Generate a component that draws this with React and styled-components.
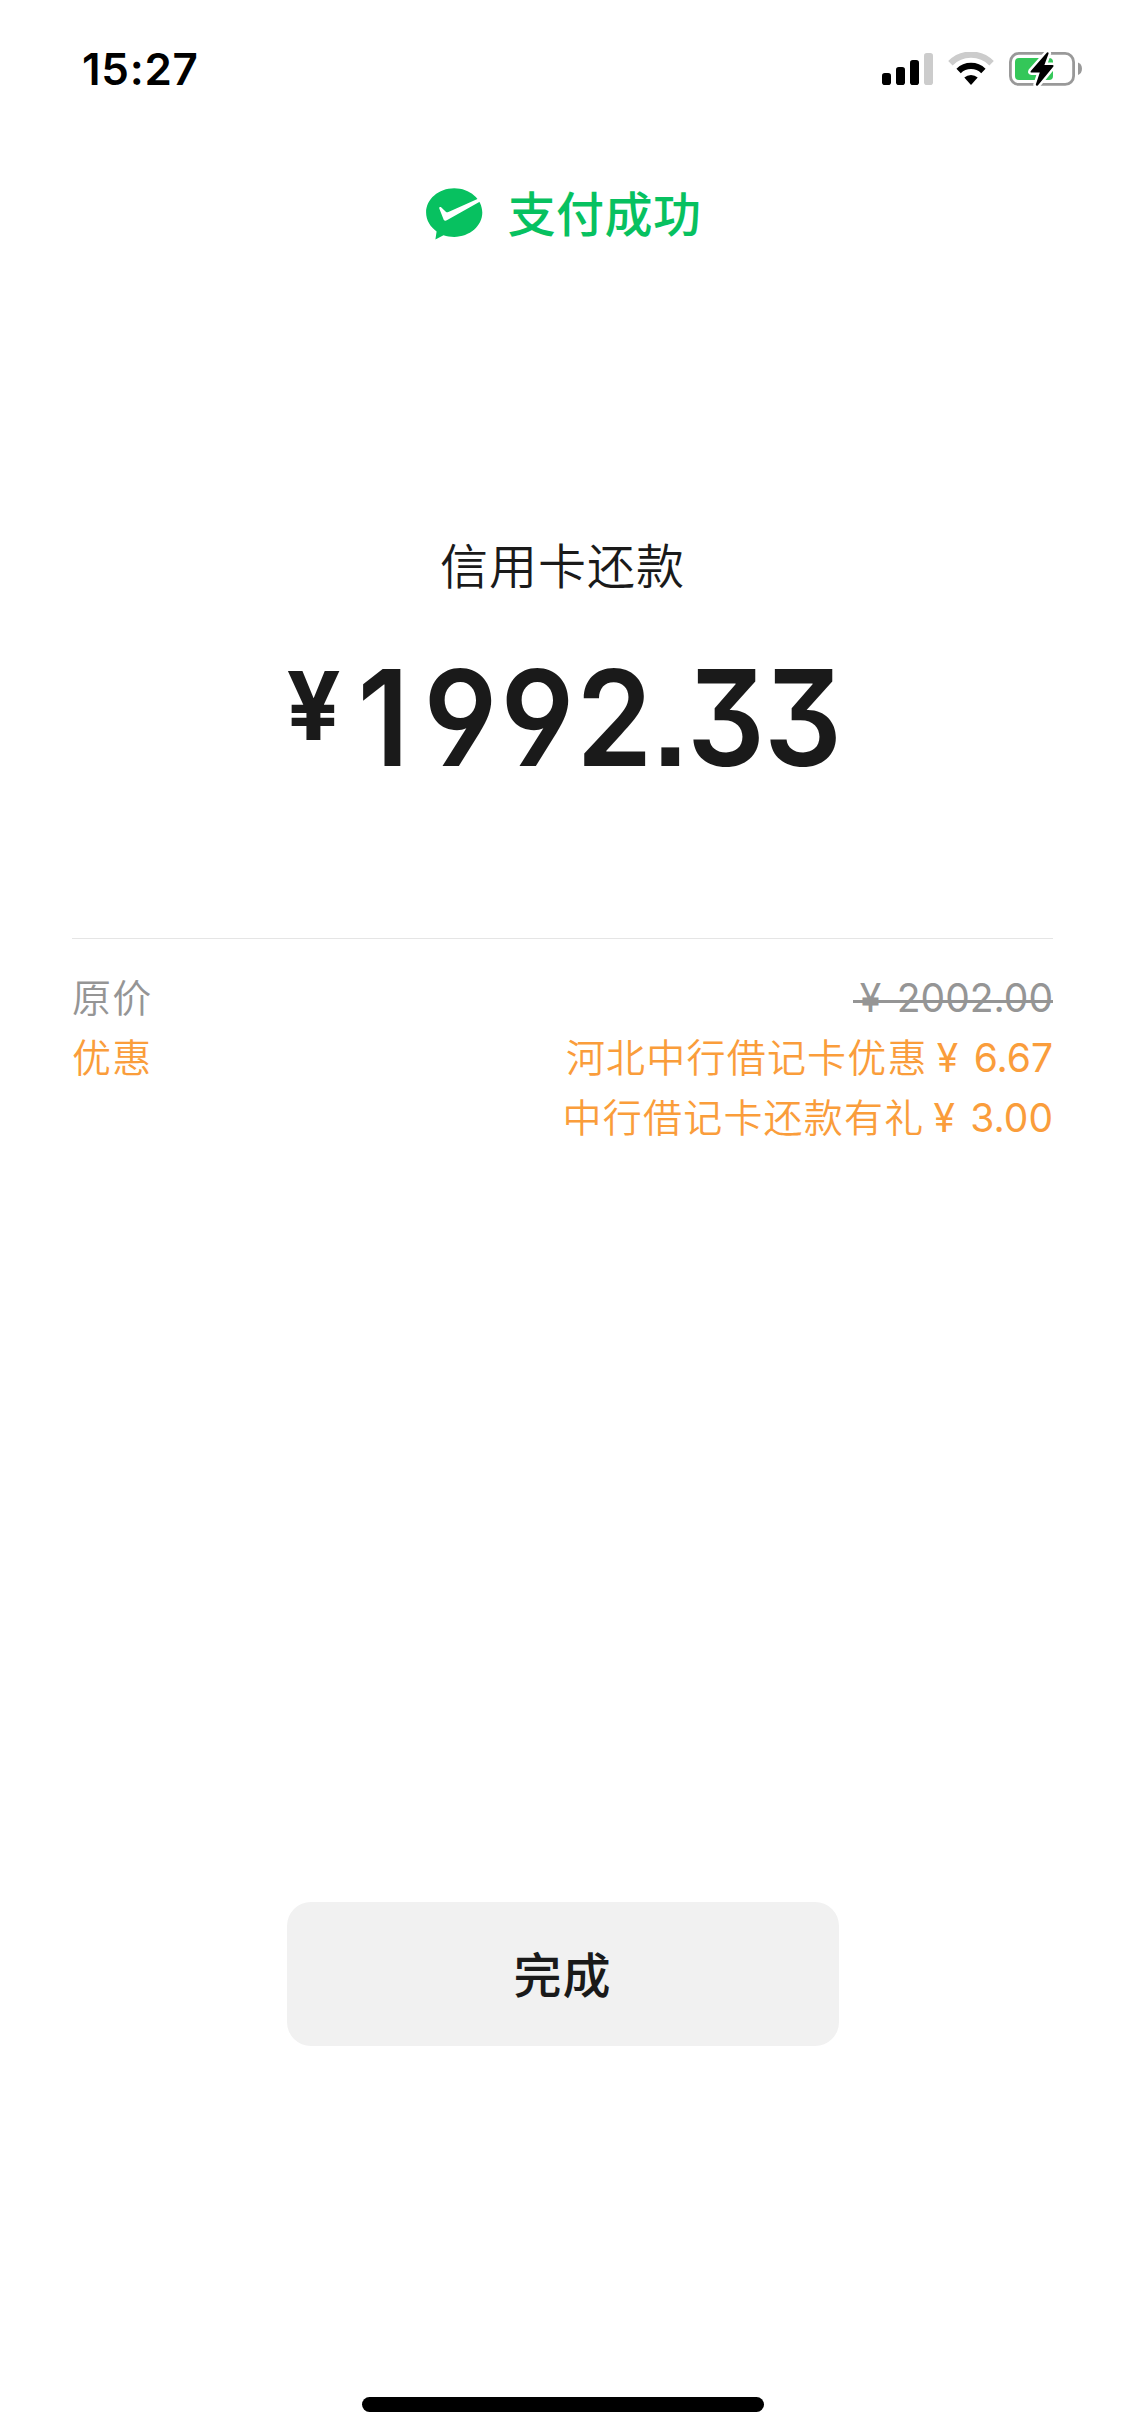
import React from 'react'
import styled, {createGlobalStyle} from 'styled-components'

const GlobalStl = createGlobalStyle`
  *, *::before, *::after {
    box-sizing: border-box;
  }

  body {
    margin: 0;
    background-color: #ffffff;
    font-family: "Inter", "Noto Sans CJK SC", sans-serif;
  }
`

const ScreenStl = styled.div`
  width: 1125px;
  height: 2436px;
  display: flex;
  flex-direction: column;
  align-items: center;
  background-color: #ffffff;
  overflow: hidden;
`

const StatusBarStl = styled.header`
  width: 100%;
  height: 132px;
  padding: 49px 42px 0 82px;
  display: flex;
  justify-content: space-between;
  align-items: flex-start;
`

const TimeStl = styled.span`
  font-size: 44px;
  font-weight: 600;
  line-height: 40px;
  letter-spacing: 0.7px;
  color: #000000;
`

const StatusIconsStl = styled.div`
  display: flex;
  gap: 15px;
  padding-top: 3px;
`

const ResultStl = styled.div`
  height: 164px;
  padding-left: 2px;
  display: flex;
  align-items: center;
  gap: 25px;
`

const ResultTextStl = styled.span`
  padding-top: 2px;
  font-size: 48px;
  font-weight: 500;
  line-height: 64px;
  letter-spacing: 0.4px;
  color: #07c160;
`

const MerchantStl = styled.div`
  margin-top: 235px;
  font-size: 48px;
  font-weight: 350;
  line-height: 72px;
  letter-spacing: 1px;
  color: #1a1a1a;
`

const AmountStl = styled.div`
  width: 552px;
  height: 160px;
  margin-top: 35px;
  display: flex;
  align-items: flex-start;
  color: #1a1a1a;
`

const CurrencyStl = styled.span`
  flex: 0 0 58px;
  font-size: 95px;
  line-height: 136px;
  font-weight: 650;
`

// condensed digits with a flat-top three, a straight-leg nine and a square dot
const DigitsStl = styled.span`
  display: flex;
  font-size: 133px;
  font-weight: 580;
  line-height: 160px;
  font-feature-settings: "ss01", "ss07", "cv09", "cv04";
  transform: scaleX(0.92);
  transform-origin: left center;
`

const DigitStl = styled.span`
  flex: none;
  width: ${({$dot}) => ($dot ? '37.5px' : '83.7px')};
  display: flex;
  justify-content: center;
`

const DetailsStl = styled.section`
  width: 981px;
  margin-top: 140px;
  padding-top: 29px;
  border-top: 1px solid #e5e5e5;
`

const DetailRowStl = styled.div`
  display: flex;
  justify-content: space-between;
  font-size: 39px;
  line-height: 60px;
  color: ${({$accent}) => ($accent ? '#fa9d3b' : '#959595')};
`

const NameStl = styled.span`
  font-weight: 350;
  letter-spacing: 1.2px;
`

const ValuesStl = styled.div`
  display: flex;
  flex-direction: column;
  align-items: flex-end;
`

const ValueStl = styled.div`
  position: relative;
  white-space: pre;

  &::after {
    content: "";
    display: ${({$struck}) => ($struck ? 'block' : 'none')};
    position: absolute;
    top: 32px;
    left: 0;
    right: 0;
    height: 3px;
    background-color: currentColor;
  }
`

const YuanStl = styled.span`
  margin-left: ${({$inset}) => ($inset ? '7px' : '9px')};
  margin-right: 4.5px;
`

const DoneBtnStl = styled.button`
  width: 552px;
  height: 144px;
  margin-top: 754px;
  padding: 0 0 4px;
  border: none;
  border-radius: 24px;
  background-color: #f1f1f1;
  font-family: inherit;
  font-size: 48px;
  font-weight: 500;
  letter-spacing: 1px;
  color: #1a1a1a;
`

const HomeIndicatorStl = styled.div`
  width: 402px;
  height: 15px;
  margin-top: auto;
  margin-bottom: 24px;
  border-radius: 8px;
  background-color: #000000;
`

const SignalIcon = () => (
  <svg width="51" height="34" viewBox="0 0 51 34">
    <rect x="0" y="21" width="9" height="12" rx="2.8" fill="#000" />
    <rect x="14" y="15" width="9" height="18" rx="2.8" fill="#000" />
    <rect x="28" y="8" width="9" height="25" rx="2.8" fill="#000" />
    <rect x="42" y="1" width="9" height="32" rx="2.8" fill="#ccc" />
  </svg>
)

const WifiIcon = () => (
  <svg width="46" height="34" viewBox="0 0 46 34">
    <path d="M2.4 11.2 A29 29 0 0 1 43.6 11.2" fill="none" stroke="#ccc" strokeWidth="6.2" />
    <path d="M10.6 19 A17.8 17.8 0 0 1 35.4 19" fill="none" stroke="#000" strokeWidth="6.2" />
    <path d="M16.3 25.6 A9.6 9.6 0 0 1 29.7 25.6 L23 33 Z" fill="#000" />
  </svg>
)

const BatteryIcon = () => (
  <svg width="74" height="34" viewBox="0 0 74 34">
    <rect x="1.4" y="1.4" width="63.2" height="31" rx="8.5" fill="none" stroke="#999" strokeWidth="2.8" />
    <rect x="6" y="6" width="38" height="22" rx="4" fill="#34c759" />
    <path d="M69 10.5 C71.6 11.4 73 13.8 73 16.8 C73 19.8 71.6 22.2 69 23.1 Z" fill="#999" />
    <path
      d="M38 0.6 L21.8 19 Q21 20.6 22.6 20.6 L30.8 20.6 L26.8 32.6 Q27 34.4 28.8 33.4 L44.4 14.6 Q45 13 43.4 13 L35.4 13 L39.6 1.4 Q39.4 -0.4 38 0.6 Z"
      fill="#000"
      stroke="#fff"
      strokeWidth="5"
      paintOrder="stroke"
    />
  </svg>
)

const PayIcon = () => (
  <svg width="57" height="52" viewBox="0 0 57 52">
    <path
      d="M28.2 0.3 C43.8 0.3 56.3 11.2 56.3 24.6 C56.3 38 43.8 48.9 28.2 48.9 C24.4 48.9 20.8 48.4 17.5 47.2 L9.4 51.4 L10.6 43.4 C4.2 39 0.1 32.2 0.1 24.6 C0.1 11.2 12.6 0.3 28.2 0.3 Z"
      fill="#07c160"
    />
    <path
      d="M52 10.8 L22.4 24 C21.4 24.4 20.6 24.3 19.8 23.7 L15.4 19.4 C14.1 18.4 12.8 19.1 13.3 20.6 L17.5 31.2 C18 32.6 19.4 33.1 20.8 32.3 L55 12.9 Z"
      fill="#fff"
    />
  </svg>
)

const total = '1992.33'

const discounts = [
  {name: '河北中行借记卡优惠', amount: '6.67'},
  {name: '中行借记卡还款有礼', amount: '3.00'},
]

const App = () => {
  return (
    <>
      <GlobalStl />
      <ScreenStl>
        <StatusBarStl>
          <TimeStl>15:27</TimeStl>
          <StatusIconsStl>
            <SignalIcon />
            <WifiIcon />
            <BatteryIcon />
          </StatusIconsStl>
        </StatusBarStl>

        <ResultStl>
          <PayIcon />
          <ResultTextStl>支付成功</ResultTextStl>
        </ResultStl>

        <MerchantStl>信用卡还款</MerchantStl>
        <AmountStl>
          <CurrencyStl>¥</CurrencyStl>
          <DigitsStl>
            {total.split('').map((char, i) => (
              <DigitStl key={i} $dot={char === '.'}>{char}</DigitStl>
            ))}
          </DigitsStl>
        </AmountStl>

        <DetailsStl>
          <DetailRowStl>
            <NameStl>原价</NameStl>
            <ValueStl $struck>
              <YuanStl $inset>¥</YuanStl> 2002.00
            </ValueStl>
          </DetailRowStl>
          <DetailRowStl $accent>
            <NameStl>优惠</NameStl>
            <ValuesStl>
              {discounts.map(({name, amount}) => (
                <ValueStl key={name}>
                  <NameStl>{name}</NameStl>
                  <YuanStl>¥</YuanStl> {amount}
                </ValueStl>
              ))}
            </ValuesStl>
          </DetailRowStl>
        </DetailsStl>

        <DoneBtnStl>完成</DoneBtnStl>
        <HomeIndicatorStl />
      </ScreenStl>
    </>
  )
}

export default App
